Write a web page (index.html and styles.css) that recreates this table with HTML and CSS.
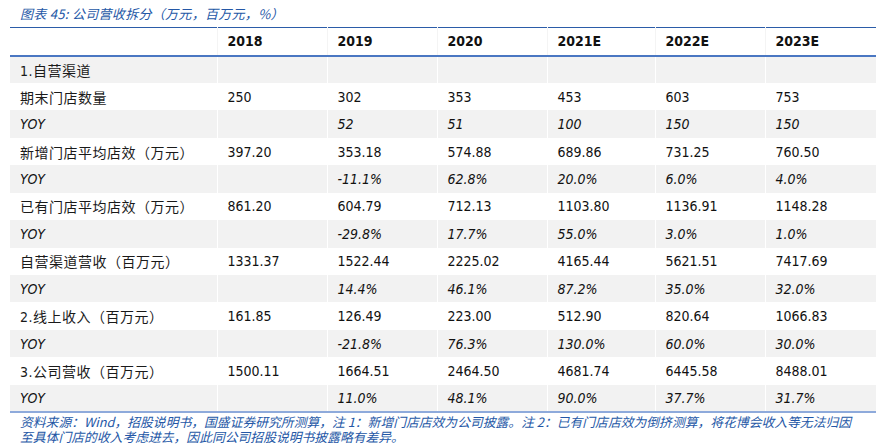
FILE: index.html
```html
<!DOCTYPE html>
<html lang="zh">
<head>
<meta charset="utf-8">
<title>公司营收拆分</title>
<link rel="stylesheet" href="styles.css">
</head>
<body>
<div class="page">
  <div class="title">图表 45: 公司营收拆分（万元，百万元，%）</div>
  <table class="data">
    <colgroup>
      <col class="c-label"><col class="c-num"><col class="c-num"><col class="c-num"><col class="c-num2"><col class="c-num"><col class="c-last">
    </colgroup>
    <thead>
      <tr><th></th><th>2018</th><th>2019</th><th>2020</th><th>2021E</th><th>2022E</th><th>2023E</th></tr>
    </thead>
    <tbody>
      <tr class="g"><td class="lbl">1.自营渠道</td><td></td><td></td><td></td><td></td><td></td><td></td></tr>
      <tr><td class="lbl">期末门店数量</td><td>250</td><td>302</td><td>353</td><td>453</td><td>603</td><td>753</td></tr>
      <tr class="g yoy"><td>YOY</td><td></td><td>52</td><td>51</td><td>100</td><td>150</td><td>150</td></tr>
      <tr><td class="lbl">新增门店平均店效（万元）</td><td>397.20</td><td>353.18</td><td>574.88</td><td>689.86</td><td>731.25</td><td>760.50</td></tr>
      <tr class="g yoy"><td>YOY</td><td></td><td>-11.1%</td><td>62.8%</td><td>20.0%</td><td>6.0%</td><td>4.0%</td></tr>
      <tr><td class="lbl">已有门店平均店效（万元）</td><td>861.20</td><td>604.79</td><td>712.13</td><td>1103.80</td><td>1136.91</td><td>1148.28</td></tr>
      <tr class="g yoy"><td>YOY</td><td></td><td>-29.8%</td><td>17.7%</td><td>55.0%</td><td>3.0%</td><td>1.0%</td></tr>
      <tr><td class="lbl">自营渠道营收（百万元）</td><td>1331.37</td><td>1522.44</td><td>2225.02</td><td>4165.44</td><td>5621.51</td><td>7417.69</td></tr>
      <tr class="g yoy"><td>YOY</td><td></td><td>14.4%</td><td>46.1%</td><td>87.2%</td><td>35.0%</td><td>32.0%</td></tr>
      <tr><td class="lbl">2.线上收入（百万元）</td><td>161.85</td><td>126.49</td><td>223.00</td><td>512.90</td><td>820.64</td><td>1066.83</td></tr>
      <tr class="g yoy"><td>YOY</td><td></td><td>-21.8%</td><td>76.3%</td><td>130.0%</td><td>60.0%</td><td>30.0%</td></tr>
      <tr><td class="lbl">3.公司营收（百万元）</td><td>1500.11</td><td>1664.51</td><td>2464.50</td><td>4681.74</td><td>6445.58</td><td>8488.01</td></tr>
      <tr class="g yoy"><td>YOY</td><td></td><td>11.0%</td><td>48.1%</td><td>90.0%</td><td>37.7%</td><td>31.7%</td></tr>
    </tbody>
  </table>
  <div class="note">
    <div class="note-line">资料来源：Wind，招股说明书，国盛证券研究所测算，注 1：新增门店店效为公司披露。注 2：已有门店店效为倒挤测算，将花博会收入等无法归因</div>
    <div class="note-line">至具体门店的收入考虑进去，因此同公司招股说明书披露略有差异。</div>
  </div>
</div>
</body>
</html>
```

FILE: styles.css
```css
html, body {
  margin: 0;
  padding: 0;
  background: #ffffff;
}

.page {
  width: 866px;
  padding: 5px 0 0 10px;
  font-family: "DejaVu Sans Condensed", "DejaVu Sans", "Noto Sans CJK SC", sans-serif;
  color: #111111;
}

.title {
  height: 22px;
  line-height: 18px;
  padding-left: 10px;
  font-family: "Noto Sans CJK SC", sans-serif;
  font-style: italic;
  font-size: 13px;
  letter-spacing: 0.3px;
  color: #2457a6;
}

.data {
  width: 866px;
  border-collapse: collapse;
  table-layout: fixed;
  font-size: 14px;
}

.c-label { width: 207px; }
.c-num { width: 110px; }
.c-num2 { width: 108px; }
.c-last { width: 111px; }

.data thead tr {
  height: 28px;
  border-top: 1px solid #2b5ca8;
  border-bottom: 2px solid #4a77c2;
}

.data th {
  text-align: left;
  font-weight: bold;
  padding: 0 0 0 10px;
  color: #111111;
  border-left: 1px solid #f4f4f4;
}

.data th:first-child {
  border-left: none;
}

.data tbody tr {
  height: 27.45px;
}

.data td {
  padding: 0 0 0 10px;
  white-space: nowrap;
  border-left: 1px solid #ffffff;
}

.data td:first-child {
  border-left: none;
}

.data tr.g td {
  background: #f2f2f2;
}

.data tr.yoy td {
  font-style: italic;
}

.data td.lbl {
  font-family: "DejaVu Sans Condensed", "Noto Sans CJK SC", sans-serif;
  letter-spacing: 0.5px;
  color: #1a1a1a;
}

.data tbody tr:last-child {
  border-bottom: 2px solid #8eaadb;
}

.note {
  padding: 1px 0 0 10px;
  font-family: "Noto Sans CJK SC", sans-serif;
  font-style: italic;
  font-size: 12.8px;
  color: #2457a6;
}

.note-line {
  height: 15px;
  line-height: 15px;
  white-space: nowrap;
}
```
